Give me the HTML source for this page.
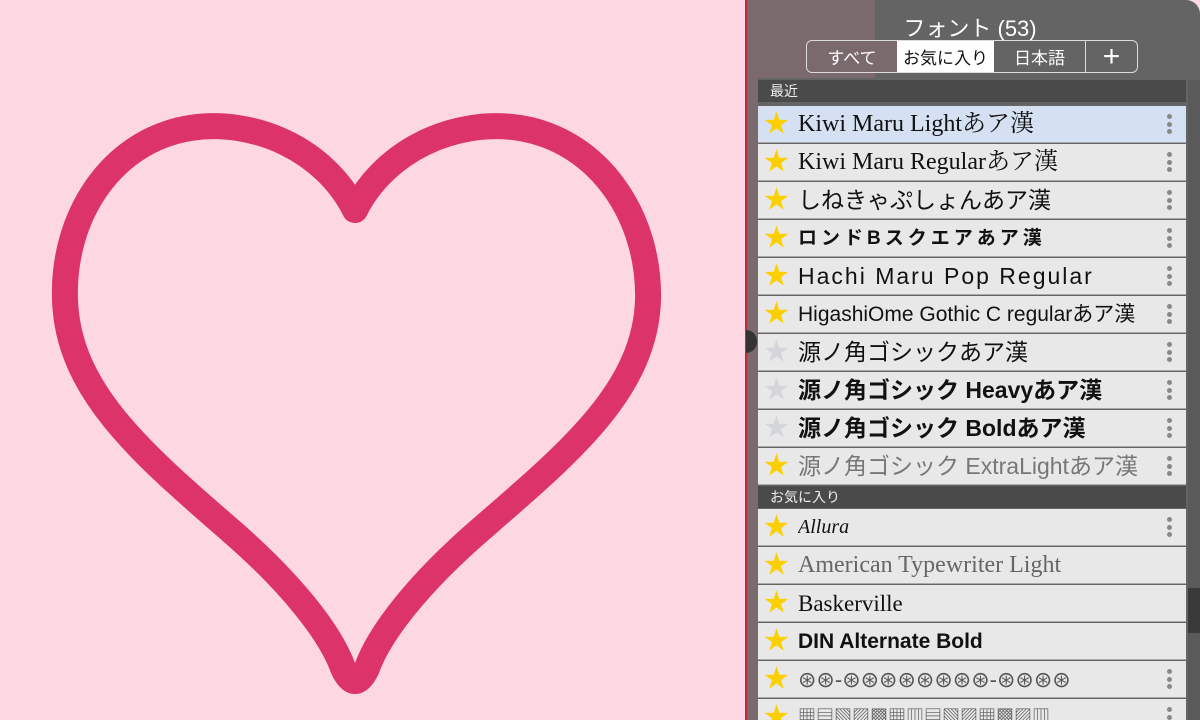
<!DOCTYPE html>
<html style="overflow:hidden;width:1200px;height:720px"><head><meta charset="utf-8"><style>
body{margin:0;width:1200px;height:720px;overflow:hidden;background:#fdd8e2;position:relative;font-family:"Liberation Sans","Noto Sans CJK JP",sans-serif}
#panel{position:absolute;left:745px;top:0;width:455px;height:720px;background:#646464;border-left:2px solid #c0283c;border-top-right-radius:14px;box-sizing:border-box}
#tint{position:absolute;left:747px;top:0;width:128px;height:78px;background:#7a6a6e}
#strip{position:absolute;left:747px;top:78px;width:11px;height:642px;background:#7a6a6e}
.title{position:absolute;left:875px;width:190px;top:11px;text-align:center;color:#fff;font-size:22px}
.seg{position:absolute;left:806px;top:40px;width:332px;height:33px;border:1.5px solid #ddd;border-radius:6px;box-sizing:border-box;display:flex;overflow:hidden;color:#fff;font-size:17px}
.seg div{display:flex;align-items:center;justify-content:center;height:100%}
.hdr{position:absolute;left:758px;width:428px;height:22px;background:#4a4a4a;color:#eee;font-size:14px;padding-left:12px;box-sizing:border-box;line-height:22px}
.row{position:absolute;left:758px;width:428px;height:37px;background:#e8e8e8;border-bottom:1.5px solid #aaa;box-sizing:border-box}
.row .s{position:absolute;left:6px;top:5px;font-size:25px;color:#fcd000;line-height:26px}
.row .s.g{color:#d4d6dc}
.row .t{position:absolute;left:40px;top:0;height:37px;line-height:37px;font-size:23px;color:#111;white-space:nowrap;overflow:hidden;width:350px}
.row .d{position:absolute;right:14px;top:8px;width:5px}
.row .d i{display:block;width:5px;height:5px;border-radius:50%;background:#888;margin-bottom:2.5px}
</style></head><body>
<svg width="745" height="720" style="position:absolute;left:0;top:0">
<path d="M355,210 C325,150 255,118 190,128 C110,141 62,218 65,300 C68,390 140,452 230,530 C290,582 330,632 343,668 Q355,694 367,668 C380,632 420,582 480,530 C570,452 645,390 648,300 C650,218 600,141 520,128 C455,118 385,150 355,210 Z" fill="none" stroke="#dc3368" stroke-width="26" stroke-linejoin="round"/>
</svg>
<div id="panel"></div><div id="tint"></div><div id="strip"></div>
<div style="position:absolute;left:746px;top:330px;width:11px;height:23px;background:#333;border-radius:0 12px 12px 0"></div>
<div class="title">フォント (53)</div>
<div class="seg"><div style="width:90px;background:#7a6a6e">すべて</div><div style="width:97px;background:#fff;color:#111">お気に入り</div><div style="width:91px;border-right:1.5px solid #ddd">日本語</div><div style="flex:1;font-size:30px">+</div></div>
<div style="position:absolute;left:1188px;top:80px;width:12px;height:640px;background:#5a5a5a"></div>
<div style="position:absolute;left:1188px;top:588px;width:12px;height:45px;background:#3a3a3a"></div>
<div class="hdr" style="top:80px">最近</div>
<div class="row" style="top:106px;background:#d5e0f2"><span class="s">★</span><span class="t" style="font-family:'Liberation Serif','Noto Serif CJK SC',serif;font-size:24px">Kiwi Maru Lightあア漢</span><span class="d"><i></i><i></i><i></i></span></div>
<div class="row" style="top:144px"><span class="s">★</span><span class="t" style="font-family:'Liberation Serif','Noto Serif CJK SC',serif;font-size:24px">Kiwi Maru Regularあア漢</span><span class="d"><i></i><i></i><i></i></span></div>
<div class="row" style="top:182px"><span class="s">★</span><span class="t">しねきゃぷしょんあア漢</span><span class="d"><i></i><i></i><i></i></span></div>
<div class="row" style="top:220px"><span class="s">★</span><span class="t" style="font-weight:bold;font-size:19px;letter-spacing:4px">ロンドBスクエアあア漢</span><span class="d"><i></i><i></i><i></i></span></div>
<div class="row" style="top:258px"><span class="s">★</span><span class="t" style="letter-spacing:2px">Hachi Maru Pop Regular</span><span class="d"><i></i><i></i><i></i></span></div>
<div class="row" style="top:296px"><span class="s">★</span><span class="t" style="font-size:21px">HigashiOme Gothic C regularあア漢</span><span class="d"><i></i><i></i><i></i></span></div>
<div class="row" style="top:334px"><span class="s g">★</span><span class="t">源ノ角ゴシックあア漢</span><span class="d"><i></i><i></i><i></i></span></div>
<div class="row" style="top:372px"><span class="s g">★</span><span class="t" style="font-weight:bold">源ノ角ゴシック Heavyあア漢</span><span class="d"><i></i><i></i><i></i></span></div>
<div class="row" style="top:410px"><span class="s g">★</span><span class="t" style="font-weight:bold">源ノ角ゴシック Boldあア漢</span><span class="d"><i></i><i></i><i></i></span></div>
<div class="row" style="top:448px"><span class="s">★</span><span class="t" style="color:#777">源ノ角ゴシック ExtraLightあア漢</span><span class="d"><i></i><i></i><i></i></span></div>
<div class="hdr" style="top:486px">お気に入り</div>
<div class="row" style="top:509px"><span class="s">★</span><span class="t" style="font-family:'Liberation Serif',serif;font-style:italic;font-size:20px">Allura</span><span class="d"><i></i><i></i><i></i></span></div>
<div class="row" style="top:547px"><span class="s">★</span><span class="t" style="font-family:'Liberation Serif',serif;color:#666;font-size:24px">American Typewriter Light</span></div>
<div class="row" style="top:585px"><span class="s">★</span><span class="t" style="font-family:'Liberation Serif',serif">Baskerville</span></div>
<div class="row" style="top:623px"><span class="s">★</span><span class="t" style="font-weight:bold;font-size:21px">DIN Alternate Bold</span></div>
<div class="row" style="top:661px"><span class="s">★</span><span class="t" style="font-size:22px;color:#555">⊛⊛-⊛⊛⊛⊛⊛⊛⊛⊛-⊛⊛⊛⊛</span><span class="d"><i></i><i></i><i></i></span></div>
<div class="row" style="top:699px"><span class="s">★</span><span class="t" style="font-size:18px;color:#555">▦▤▧▨▩▦▥▤▧▨▦▩▨▥</span><span class="d"><i></i><i></i><i></i></span></div>
</body></html>
